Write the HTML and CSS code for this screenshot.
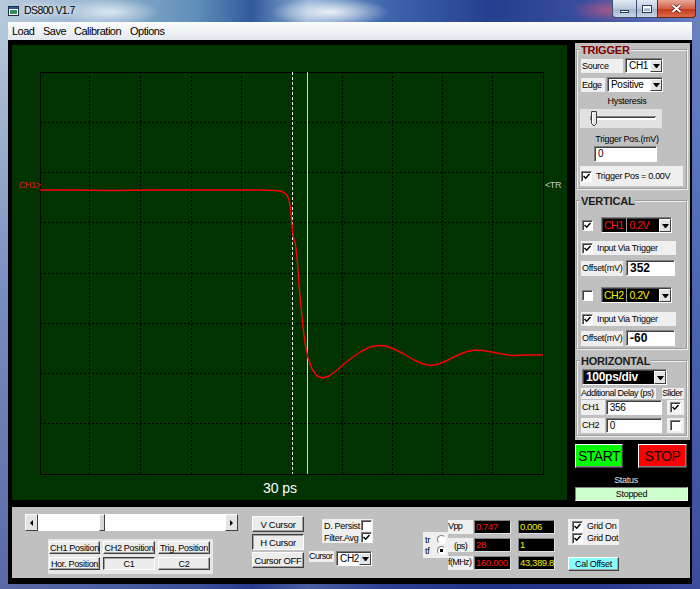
FILE: index.html
```html
<!DOCTYPE html>
<html lang="en">
<head>
<meta charset="utf-8">
<title>DS800 V1.7</title>
<link rel="stylesheet" href="styles.css">
</head>
<body>
<div class="window">

  <div class="titlebar">
    <svg class="appicon" width="11" height="10" viewBox="0 0 11 10">
      <rect x="0.5" y="0.5" width="10" height="9" fill="#fff" stroke="#1c2c40"/>
      <rect x="1" y="1" width="9" height="2" fill="#2a5a9a"/>
      <rect x="2" y="4" width="7" height="4" fill="#3a8a5a"/>
    </svg>
    <span class="title">DS800 V1.7</span>
    <div class="caption">
      <span class="cbtn cmin"><i></i></span>
      <span class="cbtn cmax"><i></i></span>
      <span class="cbtn cclose">
        <svg width="11" height="9" viewBox="0 0 11 9"><path d="M1.5 1 L9.5 8 M9.5 1 L1.5 8" stroke="#5a1a10" stroke-width="3.4"/><path d="M1.5 1 L9.5 8 M9.5 1 L1.5 8" stroke="#fff" stroke-width="2"/></svg>
      </span>
    </div>
  </div>

  <div class="client">
    <div class="menubar">
      <span class="m-load">Load</span>
      <span class="m-save">Save</span>
      <span class="m-cal">Calibration</span>
      <span>Options</span>
    </div>

    <div class="main">
      <div class="top">
        <!-- scope screen -->
        <svg class="scope" width="555" height="455" viewBox="0 0 555 455">
          <rect width="555" height="455" fill="#003300"/>
          <g stroke="#000" stroke-width="1" stroke-dasharray="2 2">
            <path d="M77.5 27V429 M128.5 27V429 M179.5 27V429 M229.5 27V429 M279.5 27V429 M330.5 27V429 M380.5 27V429 M430.5 27V429 M480.5 27V429"/>
            <path d="M28 77.5H531 M28 127.5H531 M28 177.5H531 M28 228.5H531 M28 278.5H531 M28 328.5H531 M28 378.5H531"/>
          </g>
          <rect x="28.5" y="27.5" width="503" height="402" fill="none" stroke="#000"/>
          <path d="M280.5 27V429" stroke="#fff" stroke-dasharray="3 2"/>
          <path d="M295.5 27V429" stroke="#c8dcc8"/>
          <polyline fill="none" stroke="#ff0000" stroke-width="1.4" stroke-linejoin="round"
            points="28,145 60,145 100,145.5 140,145 180,145 220,145 250,145 262,145.5 268,146 272,147.5 275,150 277,155 278.5,163 279.5,175 280.5,186 281.5,193 283,197 284,203 285.5,218 287,240 289,262 291,282 293,298 296,313 300,324 305,331 311,333 317,331 324,326 332,319 341,312 350,306 358,302 366,300.5 374,301 382,304 392,309 402,315 411,319 419,320.5 427,319 436,315 446,310 455,306.5 463,305 471,305.5 480,307 490,309 500,310.5 515,310 531,310"/>
          <text class="tag-ch1" x="7" y="143">CH1&gt;</text>
          <text class="tag-tr" x="533" y="143">&lt;TR</text>
          <text class="tdelta" x="268" y="448" text-anchor="middle">30 ps</text>
        </svg>

        <div class="side">
          <div class="panel">
            <fieldset class="grp trig">
              <legend>TRIGGER</legend>
              <div class="row src">
                <span class="lbl w42">Source</span>
                <div class="combo cb-src"><span class="val">CH1</span><i class="arr"></i></div>
              </div>
              <div class="row edge">
                <span class="lbl w24">Edge</span>
                <div class="combo cb-edge"><span class="val">Positive</span><i class="arr"></i></div>
              </div>
              <div class="cap hyst">Hysteresis</div>
              <div class="slider">
                <svg width="82" height="19" viewBox="0 0 82 19">
                  <rect x="10" y="7" width="66" height="4" fill="#fff"/>
                  <path d="M10 7.5H76 M10.5 7V11" stroke="#808080"/>
                  <path d="M11 8.5H75" stroke="#404040"/>
                  <path d="M11.5 2.5 H16.5 V14.5 L14 17 L11.5 14.5 Z" fill="#e4e4e4" stroke="#404040"/>
                  <path d="M12.5 3.5 V14" stroke="#fff"/>
                </svg>
              </div>
              <div class="cap tpos">Trigger Pos.(mV)</div>
              <div class="edit e-tpos">0</div>
              <div class="chkrow tchk">
                <span class="chk"><svg width="7" height="7" viewBox="0 0 7 7"><path d="M0.5 3 L2.7 5.2 L6.5 1" fill="none" stroke="#000" stroke-width="1.5"/></svg></span>
                Trigger Pos = 0.00V
              </div>
            </fieldset>

            <fieldset class="grp vert">
              <legend>VERTICAL</legend>
              <div class="row chrow">
                <span class="chk"><svg width="7" height="7" viewBox="0 0 7 7"><path d="M0.5 3 L2.7 5.2 L6.5 1" fill="none" stroke="#000" stroke-width="1.5"/></svg></span>
                <div class="combo dark cb-ch"><span class="tag red">CH1</span><span class="val red">0.2V</span><i class="arr"></i></div>
              </div>
              <div class="chkrow ivt ivt1">
                <span class="chk"><svg width="7" height="7" viewBox="0 0 7 7"><path d="M0.5 3 L2.7 5.2 L6.5 1" fill="none" stroke="#000" stroke-width="1.5"/></svg></span>
                Input Via Trigger
              </div>
              <div class="row offrow off1">
                <span class="lbl w42">Offset(mV)</span>
                <div class="edit e-off">352</div>
              </div>
              <div class="row chrow ch2row">
                <span class="chk"></span>
                <div class="combo dark cb-ch"><span class="tag yel">CH2</span><span class="val yel">0.2V</span><i class="arr"></i></div>
              </div>
              <div class="chkrow ivt ivt2">
                <span class="chk"><svg width="7" height="7" viewBox="0 0 7 7"><path d="M0.5 3 L2.7 5.2 L6.5 1" fill="none" stroke="#000" stroke-width="1.5"/></svg></span>
                Input Via Trigger
              </div>
              <div class="row offrow off2">
                <span class="lbl w42">Offset(mV)</span>
                <div class="edit e-off">-60</div>
              </div>
            </fieldset>

            <fieldset class="grp horz">
              <legend>HORIZONTAL</legend>
              <div class="combo dark cb-div"><span class="val wht">100ps/div</span><i class="arr"></i></div>
              <div class="row adrow">
                <span class="lbl ad">Additional Delay (ps)</span>
                <span class="lbl sl">Slider</span>
              </div>
              <div class="row dl dl1">
                <span class="lbl w24">CH1</span>
                <div class="edit e-dl">356</div>
                <span class="cbox"><span class="chk"><svg width="7" height="7" viewBox="0 0 7 7"><path d="M0.5 3 L2.7 5.2 L6.5 1" fill="none" stroke="#000" stroke-width="1.5"/></svg></span></span>
              </div>
              <div class="row dl dl2">
                <span class="lbl w24">CH2</span>
                <div class="edit e-dl">0</div>
                <span class="cbox"><span class="chk"></span></span>
              </div>
            </fieldset>
          </div>

          <div class="runrow">
            <span class="runbtn start">START</span>
            <span class="runbtn stop">STOP</span>
          </div>
          <div class="status">Status</div>
          <div class="stopped">Stopped</div>
        </div>
      </div>

      <div class="bottom">
        <div class="scrollcol">
          <div class="hscroll">
            <span class="sbtn"><i class="tri-l"></i></span>
            <span class="strack s1"></span>
            <span class="sthumb"></span>
            <span class="strack s2"></span>
            <span class="sbtn"><i class="tri-r"></i></span>
          </div>
          <div class="posgrp">
            <span class="btn">CH1 Position</span>
            <span class="btn">CH2 Position</span>
            <span class="btn">Trig. Position</span>
            <span class="btn">Hor. Position</span>
            <span class="btn down">C1</span>
            <span class="btn">C2</span>
          </div>
        </div>

        <div class="curbtns">
          <span class="btn">V Cursor</span>
          <span class="btn down">H Cursor</span>
          <span class="btn">Cursor OFF</span>
        </div>

        <div class="persistcol">
          <div class="persist">
            <div class="prow">D. Persist <span class="chk"></span></div>
            <div class="prow">Filter.Avg <span class="chk"><svg width="7" height="7" viewBox="0 0 7 7"><path d="M0.5 3 L2.7 5.2 L6.5 1" fill="none" stroke="#000" stroke-width="1.5"/></svg></span></div>
          </div>
          <div class="row currow">
            <span class="lbl cur">Cursor</span>
            <div class="combo cb-cur"><span class="val">CH2</span><i class="arr"></i></div>
          </div>
        </div>

        <div class="trtf">
          <div class="rrow">tr <span class="radio"></span></div>
          <div class="rrow">tf <span class="radio on"></span></div>
        </div>

        <div class="meas">
          <span class="mlbl">Vpp</span>
          <span class="mval red">0.747</span>
          <span class="mval yel">0.006</span>
          <span class="mlbl ps">(ps)</span>
          <span class="mval red">28</span>
          <span class="mval yel">1</span>
          <span class="mlbl">f(MHz)</span>
          <span class="mval red">160.000</span>
          <span class="mval yel">43,389.8</span>
        </div>

        <div class="gridcol">
          <div class="gridbox">
            <div class="grow"><span class="chk"><svg width="7" height="7" viewBox="0 0 7 7"><path d="M0.5 3 L2.7 5.2 L6.5 1" fill="none" stroke="#000" stroke-width="1.5"/></svg></span>Grid On</div>
            <div class="grow"><span class="chk"><svg width="7" height="7" viewBox="0 0 7 7"><path d="M0.5 3 L2.7 5.2 L6.5 1" fill="none" stroke="#000" stroke-width="1.5"/></svg></span>Grid Dot</div>
          </div>
          <span class="btn cal">Cal Offset</span>
        </div>
      </div>
    </div>
  </div>
</div>
</body>
</html>
```

FILE: styles.css
```css
body {
  margin: 0;
  width: 700px;
  height: 589px;
  overflow: hidden;
  font-family: "Liberation Sans", Arial, sans-serif;
  font-size: 9px;
  letter-spacing: -0.3px;
  color: #000;
}

.window {
  height: 589px;
  display: flex;
  flex-direction: column;
  background:
    radial-gradient(ellipse 60px 14px at 330px 12px, rgba(255,255,255,.85), rgba(255,255,255,0)),
    radial-gradient(ellipse 50px 14px at 110px 12px, rgba(255,255,255,.7), rgba(255,255,255,0)),
    radial-gradient(ellipse 40px 12px at 610px 10px, rgba(230,90,120,.6), rgba(230,90,120,0)),
    linear-gradient(180deg, rgba(0,0,0,0) 0, rgba(0,0,0,0) 22px, rgba(40,70,160,.45) 50%, rgba(30,40,130,.6) 100%),
    linear-gradient(90deg, #b7c9db 0, #9ab8d3 12%, #5f8fb9 28%, #305a9c 36%, #8fb0d2 44%, #3f66ad 55%, #243f8f 70%, #3b4fa0 85%, #6b82c2 100%);
}

/* title bar */
.titlebar {
  height: 22px;
  flex: none;
  display: flex;
  align-items: flex-start;
}
.appicon { margin: 6px 0 0 8px; }
.title {
  margin: 4px 0 0 5px;
  font-size: 10.5px;
  letter-spacing: -0.6px;
  line-height: 13px;
  text-shadow: 0 0 5px #fff, 0 0 8px #fff;
}
.caption {
  margin: 0 4px 0 auto;
  display: flex;
  height: 18px;
}
.cbtn {
  box-sizing: border-box;
  height: 18px;
  border: 1px solid #3c4e6e;
  border-top: 0;
  display: flex;
  align-items: center;
  justify-content: center;
  background: linear-gradient(#e2eaf3, #bccadb 50%, #9fb3cc 51%, #c6d5e8);
}
.cmin { width: 24px; border-radius: 0 0 0 4px; border-right: 0; }
.cmin i {
  width: 9px;
  height: 3px;
  margin-top: 6px;
  box-sizing: border-box;
  background: #fff;
  border: 1px solid #2a3a58;
}
.cmax { width: 21px; border-right: 0; }
.cmax i {
  width: 10px;
  height: 8px;
  box-sizing: border-box;
  border: 1px solid #2a3a58;
  box-shadow: inset 0 2px 0 #fff, inset 1px 0 0 #fff, inset -1px -1px 0 #fff;
}
.cclose {
  width: 39px;
  border-radius: 0 0 4px 0;
  border-color: #6a2418;
  background: linear-gradient(#eaa898, #d3604a 50%, #c0371c 51%, #dc6a48);
}

/* client */
.client {
  flex: 1;
  margin: 0 8px 5px;
  display: flex;
  flex-direction: column;
}
.menubar {
  height: 18px;
  flex: none;
  display: flex;
  padding-left: 4px;
  background: linear-gradient(#fbfcfd, #eef1f5 60%, #e2e7ee);
  font-size: 11px;
  letter-spacing: -0.5px;
  line-height: 18px;
}
.m-load, .m-save { width: 31px; }
.m-cal { width: 56px; }

.main {
  flex: 1;
  background: #000;
  display: flex;
  flex-direction: column;
}
.top {
  height: 465px;
  display: flex;
  align-items: flex-start;
}
.scope {
  display: block;
  flex: none;
  margin: 5px 0 0 4px;
}
.tag-ch1 { fill: #e01818; font-size: 9px; letter-spacing: -0.4px; }
.tag-tr { fill: #c8c8c8; font-size: 9px; letter-spacing: -0.4px; }
.tdelta { fill: #fff; font-size: 14px; letter-spacing: 0; }

/* right side */
.side {
  width: 115px;
  margin: 3px 0 0 8px;
}
.panel {
  height: 397px;
  background: #c0c0c0;
  overflow: hidden;
}
.grp {
  margin: 0 2px 0 1px;
  padding: 0 2px 2px 3px;
  min-width: 0;
  border: 2px groove #f0f0f0;
}
.grp legend {
  margin-left: -1px;
  padding: 0 1px;
  font-weight: bold;
  font-size: 11px;
  letter-spacing: -0.2px;
  line-height: 12px;
  color: #1c1c1c;
}
.trig { margin-top: 1px; }
.trig legend { color: #800000; }
.vert, .horz { margin-top: 5px; }

.row {
  display: flex;
  align-items: center;
}
.lbl {
  box-sizing: border-box;
  height: 14px;
  line-height: 14px;
  padding-left: 1px;
  background: #efefef;
  white-space: nowrap;
  overflow: hidden;
}
.w42 { width: 42px; }
.w24 { width: 24px; }

.edit {
  box-sizing: border-box;
  background: #fff;
  border: 1px solid;
  border-color: #808080 #fff #fff #808080;
  box-shadow: inset 1px 1px 0 #404040;
  padding-left: 3px;
  font-size: 10px;
  white-space: nowrap;
}

.combo {
  box-sizing: border-box;
  display: flex;
  background: #fff;
  border: 1px solid;
  border-color: #808080 #fff #fff #808080;
  box-shadow: inset 1px 1px 0 #404040;
}
.combo .val {
  flex: 1;
  padding-left: 3px;
  white-space: nowrap;
  overflow: hidden;
}
.arr {
  width: 12px;
  margin: 1px 0 0;
  box-sizing: border-box;
  display: flex;
  align-items: center;
  justify-content: center;
  background: #e4e4e4;
  border: 1px solid;
  border-color: #fff #404040 #404040 #fff;
}
.arr::after {
  content: "";
  width: 1px;
  border-left: 3px solid transparent;
  border-right: 3px solid transparent;
  border-top: 4px solid #000;
}
.combo.dark { background: #000; }
.combo .tag {
  padding: 0 2px;
  border-right: 1px solid #9a9a9a;
}
.red { color: #ff1010; }
.yel { color: #f0f000; }
.wht { color: #fff; }

.chk {
  box-sizing: border-box;
  flex: none;
  width: 11px;
  height: 11px;
  display: flex;
  align-items: center;
  justify-content: center;
  background: #fff;
  border: 1px solid;
  border-color: #808080 #fff #fff #808080;
  box-shadow: inset 1px 1px 0 #404040;
}
.chkrow {
  box-sizing: border-box;
  display: flex;
  align-items: center;
  gap: 4px;
  padding-left: 1px;
  background: #efefef;
  white-space: nowrap;
}

/* trigger rows */
.src { margin-top: 2px; height: 15px; }
.cb-src { margin-left: 2px; width: 38px; height: 15px; line-height: 13px; font-size: 10px; }
.edge { margin-top: 4px; height: 15px; }
.cb-edge { margin-left: 2px; width: 56px; height: 15px; line-height: 13px; font-size: 10px; }
.cap {
  width: 92px;
  text-align: center;
  line-height: 12px;
}
.hyst { margin-top: 3px; }
.slider {
  margin: 2px 0 0 -1px;
  width: 82px;
  height: 19px;
  background: #e2e2e2;
}
.slider svg { display: block; }
.tpos { margin-top: 5px; }
.e-tpos { margin: 1px 0 0 13px; width: 63px; height: 16px; line-height: 14px; }
.tchk { margin: 4px 0 0 -1px; width: 103px; height: 20px; }

/* vertical rows */
.chrow { margin-top: 10px; height: 16px; }
.chrow .chk { margin-left: 1px; }
.ch2row { margin-top: 11px; }
.cb-ch {
  margin-left: 8px;
  width: 71px;
  height: 16px;
  line-height: 14px;
  font-size: 10.5px;
  letter-spacing: -0.5px;
}
.ivt { width: 95px; height: 14px; }
.ivt1 { margin-top: 8px; }
.ivt2 { margin-top: 9px; }
.offrow { height: 16px; }
.off1 { margin-top: 5px; }
.off2 { margin-top: 4px; }
.offrow .lbl { height: 15px; line-height: 15px; }
.e-off {
  margin-left: 3px;
  width: 49px;
  height: 16px;
  line-height: 14px;
  font-weight: bold;
  font-size: 12px;
  letter-spacing: 0;
}

/* horizontal rows */
.cb-div {
  margin: 2px 0 0 1px;
  width: 85px;
  height: 16px;
  line-height: 14px;
  font-weight: bold;
  font-size: 12px;
  letter-spacing: -0.3px;
}
.adrow { margin-top: 3px; }
.adrow .lbl { height: 11px; line-height: 11px; padding-left: 0; letter-spacing: -0.5px; }
.ad { width: 76px; }
.sl { margin-left: 6px; width: 22px; }
.dl { height: 15px; }
.dl1 { margin-top: 1px; }
.dl2 { margin-top: 3px; }
.dl .lbl { height: 15px; line-height: 15px; }
.e-dl { margin-left: 1px; width: 57px; height: 15px; line-height: 13px; }
.cbox {
  margin-left: 5px;
  width: 17px;
  height: 15px;
  display: flex;
  align-items: center;
  justify-content: center;
  background: #efefef;
}

/* run buttons */
.runrow {
  display: flex;
  margin-top: 4px;
}
.runbtn {
  box-sizing: border-box;
  height: 24px;
  display: flex;
  align-items: center;
  justify-content: center;
  border: 1px solid;
  border-color: #fff #404040 #404040 #fff;
  box-shadow: inset -1px -1px 0 #808080;
  font-size: 14px;
  letter-spacing: -0.5px;
}
.start { width: 48px; background: #00ff00; }
.stop { width: 49px; margin-left: 15px; background: #ff0000; color: #200000; }
.status {
  margin-top: 6px;
  width: 102px;
  text-align: center;
  line-height: 12px;
  color: #e6e6e6;
}
.stopped {
  box-sizing: border-box;
  margin-top: 1px;
  width: 113px;
  height: 14px;
  line-height: 12px;
  text-align: center;
  background: #ccffcc;
  border: 1px solid;
  border-color: #808080 #fff #fff #808080;
}

/* bottom panel */
.bottom {
  margin: 2px 0 0 4px;
  width: 678px;
  height: 71px;
  display: flex;
  align-items: flex-start;
  background: #c0c0c0;
}
.btn {
  box-sizing: border-box;
  display: flex;
  align-items: center;
  justify-content: center;
  background: #ececec;
  border: 1px solid;
  border-color: #fff #404040 #404040 #fff;
  box-shadow: inset -1px -1px 0 #a0a0a0;
  white-space: nowrap;
}
.btn.down {
  border-color: #404040 #fff #fff #404040;
  box-shadow: inset 1px 1px 0 #a0a0a0;
}

.scrollcol {
  margin: 7px 0 0 13px;
  width: 213px;
}
.hscroll {
  height: 17px;
  display: flex;
}
.sbtn {
  box-sizing: border-box;
  width: 13px;
  display: flex;
  align-items: center;
  justify-content: center;
  background: #e4e4e4;
  border: 1px solid;
  border-color: #fff #404040 #404040 #fff;
}
.tri-l { border-top: 3px solid transparent; border-bottom: 3px solid transparent; border-right: 3px solid #000; }
.tri-r { border-top: 3px solid transparent; border-bottom: 3px solid transparent; border-left: 3px solid #000; }
.strack { background: #fff; }
.s1 { width: 61px; }
.s2 { flex: 1; }
.sthumb {
  box-sizing: border-box;
  width: 6px;
  background: #d8d8d8;
  border: 1px solid;
  border-color: #fff #404040 #404040 #fff;
}
.posgrp {
  box-sizing: border-box;
  margin: 8px 0 0 23px;
  width: 165px;
  height: 35px;
  padding: 2px 0 0 1px;
  display: grid;
  grid-template-columns: 51px 52px 52px;
  grid-auto-rows: 13px;
  gap: 3px;
  background: #e6e6e6;
}

.curbtns {
  margin: 9px 0 0 14px;
  width: 52px;
  display: flex;
  flex-direction: column;
  gap: 2px;
}
.curbtns .btn { height: 16px; font-size: 9.5px; }

.persistcol {
  margin: 12px 0 0 5px;
  width: 64px;
}
.persist {
  box-sizing: border-box;
  margin-left: 13px;
  width: 51px;
  height: 24px;
  padding: 1px 0 0 2px;
  background: #efefef;
}
.prow {
  height: 11px;
  display: flex;
  align-items: center;
  justify-content: space-between;
  padding-right: 1px;
  white-space: nowrap;
}
.prow + .prow { margin-top: 1px; }
.currow { margin-top: 8px; align-items: flex-start; }
.cur { width: 25px; height: 11px; line-height: 11px; padding-left: 0; letter-spacing: -0.6px; }
.cb-cur { margin-left: 2px; width: 36px; height: 15px; line-height: 13px; font-size: 10px; }

.trtf {
  box-sizing: border-box;
  margin: 25px 0 0 50px;
  width: 25px;
  height: 26px;
  padding: 2px 0 0 2px;
  background: #efefef;
}
.rrow {
  height: 11px;
  display: flex;
  align-items: center;
  justify-content: space-between;
  padding-right: 2px;
}
.radio {
  box-sizing: border-box;
  width: 9px;
  height: 9px;
  border-radius: 50%;
  border: 1px solid;
  border-color: #808080 #fff #fff #808080;
  background: #fff;
}
.radio.on { background: radial-gradient(circle, #000 0 1.6px, #fff 2px); }

.meas {
  margin: 13px 0 0 0;
  display: grid;
  grid-template-columns: 25px 38px 44px;
  grid-auto-rows: 14px;
  row-gap: 4px;
}
.mlbl {
  background: #efefef;
  line-height: 12px;
  letter-spacing: -0.6px;
  white-space: nowrap;
  overflow: hidden;
}
.mlbl.ps { padding-left: 6px; line-height: 16px; }
.mval {
  box-sizing: border-box;
  background: #000;
  border: 1px solid;
  border-color: #808080 #e0e0e0 #e0e0e0 #808080;
  padding-left: 1px;
  font-size: 9.5px;
  letter-spacing: -0.4px;
  line-height: 12px;
  white-space: nowrap;
  overflow: hidden;
}
.meas .mval.yel { margin-left: 7px; }
.meas .mval.red { margin-left: 1px; }

.gridcol {
  margin: 12px 0 0 13px;
  width: 51px;
}
.gridbox {
  box-sizing: border-box;
  height: 26px;
  padding: 1px 0 0 4px;
  background: #efefef;
}
.grow {
  height: 12px;
  display: flex;
  align-items: center;
  gap: 4px;
  white-space: nowrap;
}
.cal {
  margin-top: 12px;
  height: 14px;
  background: #88ffff;
}
```
